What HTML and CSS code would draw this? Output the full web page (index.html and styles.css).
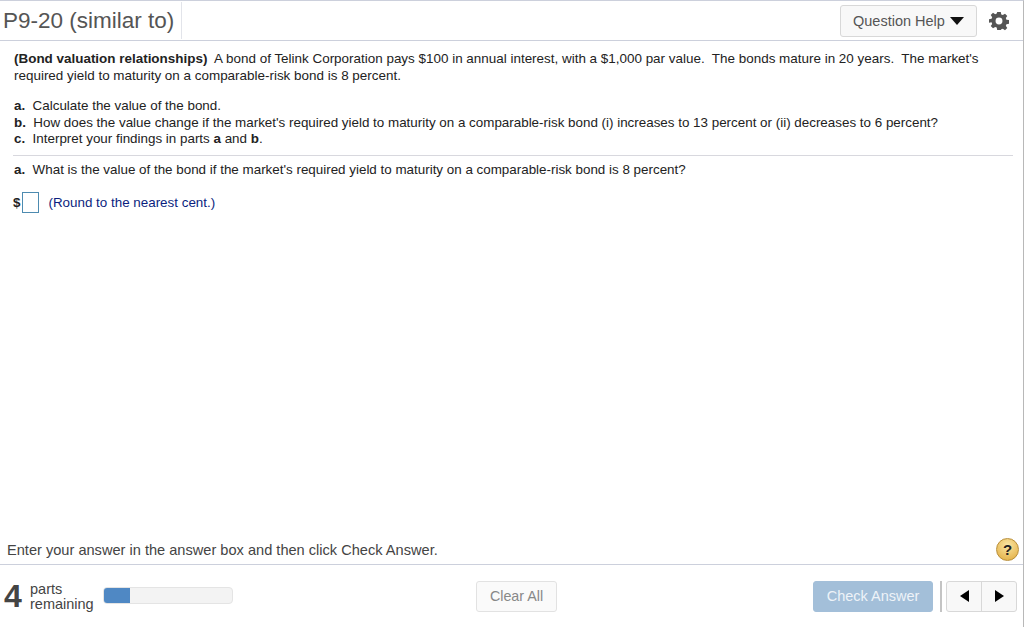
FILE: index.html
```html
<!DOCTYPE html>
<html lang="en">
  <head>
    <meta charset="UTF-8" />
    <title>P9-20 (similar to)</title>
    <link rel="stylesheet" href="styles.css">
  </head>
  <body>
    <div class="player">
      <div class="header">
        <div class="title">P9-20 (similar to)</div>
        <button class="help-btn">Question Help <span class="arrow-down"></span></button>
        <svg class="gear" width="20" height="20" viewBox="0 0 22 22">
          <path fill="#555" fill-rule="evenodd" d="M9 1h4l.5 2.8 1.7.7 2.4-1.6 2.5 2.5-1.6 2.4.7 1.7 2.8.5v4l-2.8.5-.7 1.7 1.6 2.4-2.5 2.5-2.4-1.6-1.7.7L13 21H9l-.5-2.8-1.7-.7-2.4 1.6-2.5-2.5 1.6-2.4-.7-1.7L0 13V9l2.8-.5.7-1.7L1.9 4.4l2.5-2.5 2.4 1.6 1.7-.7zM11 7.2a3.8 3.8 0 1 0 0 7.6 3.8 3.8 0 0 0 0-7.6z"/>
        </svg>
      </div>

      <div class="content">
        <p class="intro"><b>(Bond valuation relationships)</b>&nbsp; A bond of Telink Corporation pays $100 in annual interest, with a $1,000 par value.&nbsp; The bonds mature in 20 years.&nbsp; The market's required yield to maturity on a comparable-risk bond is 8 percent.</p>
        <ol class="tasks">
          <li><b>a.</b>&nbsp; Calculate the value of the bond.</li>
          <li><b>b.</b>&nbsp; How does the value change if the market's required yield to maturity on a comparable-risk bond (i) increases to 13 percent or (ii) decreases to 6 percent?</li>
          <li><b>c.</b>&nbsp; Interpret your findings in parts <b>a</b> and <b>b</b>.</li>
        </ol>
        <hr class="divider">
        <p class="question"><b>a.</b>&nbsp; What is the value of the bond if the market's required yield to maturity on a comparable-risk bond is 8 percent?</p>
        <div class="answer">
          <b>$</b><span class="answer-box"></span>
          <span class="hint">(Round to the nearest cent.)</span>
        </div>
      </div>

      <div class="instruction">
        <span>Enter your answer in the answer box and then click Check Answer.</span>
        <span class="help-circle">?</span>
      </div>

      <div class="footer">
        <div class="parts">
          <span class="parts-num">4</span>
          <span class="parts-label">parts<br>remaining</span>
          <div class="progress"><div class="progress-fill"></div></div>
        </div>
        <button class="clear-btn">Clear All</button>
        <div class="actions">
          <button class="check-btn">Check Answer</button>
          <span class="sep"></span>
          <div class="nav">
            <button class="nav-btn"><span class="arrow-left"></span></button>
            <button class="nav-btn"><span class="arrow-right"></span></button>
          </div>
        </div>
      </div>
    </div>
  </body>
</html>
```

FILE: styles.css
```css
html,
body {
  margin: 0;
  padding: 0;
  background-color: #fff;
}

body {
  font-family: "Liberation Sans", Arial, sans-serif;
  font-size: 13.4px;
  color: #222;
}

button {
  font-family: inherit;
  cursor: pointer;
}

.player {
  display: flex;
  flex-direction: column;
  box-sizing: border-box;
  width: 1024px;
  height: 627px;
  border-top: 1px solid #ccd0dc;
  border-right: 1px solid #b8b8b8;
}

.header {
  display: flex;
  align-items: center;
  box-sizing: border-box;
  height: 40px;
  border-bottom: 1px solid #ccd0dc;
}

.title {
  box-sizing: border-box;
  width: 182px;
  height: 37px;
  padding-left: 3px;
  border-right: 1px solid #e2e4ea;
  font-size: 22.5px;
  line-height: 37px;
  color: #555;
}

.help-btn {
  display: flex;
  align-items: center;
  gap: 5px;
  box-sizing: border-box;
  width: 137px;
  height: 32px;
  margin-left: auto;
  padding: 0 0 0 12px;
  background-color: #f8f8f8;
  border: 1px solid #d8d8d8;
  border-radius: 3px;
  font-size: 14.5px;
  color: #555;
}

.arrow-down {
  width: 0;
  height: 0;
  border-left: 7px solid transparent;
  border-right: 7px solid transparent;
  border-top: 8px solid #111;
}

.gear {
  margin: 0 14px 0 12px;
}

.content {
  flex: 1;
  padding: 10px 10px 0 14px;
}

.intro {
  width: 975px;
  margin: 0 0 14px;
  font-size: 13.44px;
  line-height: 16.5px;
}

.tasks {
  margin: 0;
  padding: 0;
  list-style: none;
  line-height: 16.5px;
}

.divider {
  height: 1px;
  margin: 7px 0 6px -1px;
  background-color: #d8d8de;
  border: none;
}

.question {
  margin: 0;
  line-height: 16.5px;
}

.answer {
  display: flex;
  align-items: center;
  margin-top: 13px;
  height: 22px;
}

.answer b {
  margin: 0 2px 0 -1px;
}

.answer-box {
  box-sizing: border-box;
  width: 17px;
  height: 21px;
  background-color: #fff;
  border: 1px solid #4d8bb0;
}

.hint {
  margin-left: 9px;
  color: #0b1f80;
}

.instruction {
  display: flex;
  align-items: center;
  justify-content: space-between;
  box-sizing: border-box;
  height: 30px;
  padding: 0 4px 0 7px;
  border-bottom: 1px solid #ccd0dc;
  font-size: 14.6px;
  color: #444;
}

.help-circle {
  box-sizing: border-box;
  width: 23px;
  height: 23px;
  background: radial-gradient(circle at 50% 30%, #fbe6a4, #e0a93a);
  border: 1px solid #b98f3a;
  border-radius: 50%;
  font-size: 15px;
  font-weight: bold;
  line-height: 21px;
  text-align: center;
  color: #222;
}

.footer {
  display: flex;
  align-items: center;
  box-sizing: border-box;
  height: 62px;
  padding: 0 6px 0 4px;
}

.parts {
  display: flex;
  align-items: center;
  width: 472px;
}

.parts-num {
  width: 26px;
  font-size: 32px;
  font-weight: bold;
  color: #444;
}

.parts-label {
  width: 73px;
  padding-top: 2px;
  font-size: 14.5px;
  line-height: 15px;
  color: #444;
}

.progress {
  box-sizing: border-box;
  width: 130px;
  height: 17px;
  margin-top: -1px;
  background-color: #f3f3f3;
  border: 1px solid #e4e4e4;
  border-radius: 4px;
  overflow: hidden;
}

.progress-fill {
  width: 26px;
  height: 100%;
  background-color: #4f88c4;
}

.clear-btn {
  box-sizing: border-box;
  width: 81px;
  height: 31px;
  background-color: #fafafa;
  border: 1px solid #e2e2e2;
  border-radius: 3px;
  font-size: 14.3px;
  color: #888;
}

.actions {
  display: flex;
  align-items: center;
  margin-left: auto;
}

.check-btn {
  box-sizing: border-box;
  width: 120px;
  height: 31px;
  background-color: #a3bfd9;
  border: 1px solid #a3bfd9;
  border-radius: 3px;
  font-size: 14.5px;
  color: #eef3f8;
}

.sep {
  width: 2px;
  height: 31px;
  margin: 0 4px 0 7px;
  background-color: #c4c4c4;
}

.nav {
  display: flex;
  box-sizing: border-box;
  height: 31px;
  background-color: #f8f8f8;
  border: 1px solid #d8d8d8;
  border-radius: 3px;
}

.nav-btn {
  display: flex;
  align-items: center;
  justify-content: center;
  width: 34px;
  padding: 0;
  background: none;
  border: none;
}

.nav-btn + .nav-btn {
  width: 35px;
  border-left: 1px solid #d8d8d8;
}

.arrow-left,
.arrow-right {
  width: 0;
  height: 0;
  border-top: 6px solid transparent;
  border-bottom: 6px solid transparent;
}

.arrow-left {
  border-right: 9px solid #000;
}

.arrow-right {
  border-left: 9px solid #000;
}
```
